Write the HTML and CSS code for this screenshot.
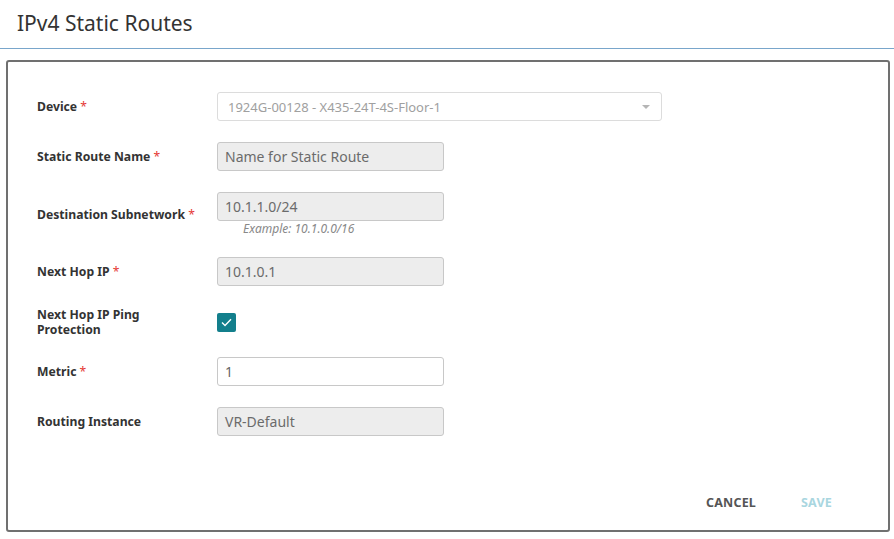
FILE: index.html
```html
<!DOCTYPE html>
<html>
<head>
<meta charset="utf-8">
<link rel="stylesheet" href="styles.css">
</head>
<body>
<div class="header"><h1 class="title">IPv4 Static Routes</h1></div>
<div class="dialog">
  <div class="form">
    <div class="row">
      <div class="label">Device <span class="req">*</span></div>
      <div class="select">
        <span>1924G-00128 - X435-24T-4S-Floor-1</span>
        <span class="caret"></span>
      </div>
    </div>
    <div class="row">
      <div class="label">Static Route Name <span class="req">*</span></div>
      <div class="input disabled">Name for Static Route</div>
    </div>
    <div class="row">
      <div class="label">Destination Subnetwork <span class="req">*</span></div>
      <div class="field">
        <div class="input disabled">10.1.1.0/24</div>
        <div class="help">Example: 10.1.0.0/16</div>
      </div>
    </div>
    <div class="row">
      <div class="label">Next Hop IP <span class="req">*</span></div>
      <div class="input disabled">10.1.0.1</div>
    </div>
    <div class="row row-check">
      <div class="label two">Next Hop IP Ping<br>Protection</div>
      <div class="checkbox">
        <svg width="11" height="9" viewBox="0 0 11 9"><path d="M1 4.6 L4 7.4 L10 1.2" fill="none" stroke="#fff" stroke-width="1.4"/></svg>
      </div>
    </div>
    <div class="row">
      <div class="label">Metric <span class="req">*</span></div>
      <div class="input">1</div>
    </div>
    <div class="row">
      <div class="label">Routing Instance</div>
      <div class="input disabled">VR-Default</div>
    </div>
  </div>
  <div class="footer">
    <span class="btn cancel">CANCEL</span>
    <span class="btn save">SAVE</span>
  </div>
</div>
</body>
</html>
```
FILE: styles.css
```css
* { box-sizing: border-box; }
html, body { margin: 0; padding: 0; background: #fff; }
body { font-family: "Noto Sans", "Open Sans", sans-serif; color: #333; width: 894px; height: 539px; overflow: hidden; }
.header { height: 49px; border-bottom: 1px solid #79a6cb; padding-left: 17px; }
.title { margin: 0; font-weight: 400; font-size: 21px; line-height: 46px; color: #333; }
.dialog {
  margin: 11px 0 0 6px;
  width: 884px;
  height: 472px;
  border: 2px solid #707070;
  border-radius: 3px;
  display: flex;
  flex-direction: column;
}
.form { padding: 30px 0 0 29px; display: flex; flex-direction: column; }
.row { display: flex; align-items: center; min-height: 29px; margin-bottom: 21px; }
.row:first-child { min-height: 28px; }
.row-check { min-height: 30px; margin-bottom: 20px; }
.label { width: 180px; font-size: 12.2px; font-weight: 700; color: #333; line-height: 15px; }
.req { color: #e53935; font-weight: 400; }
.select {
  width: 445px; height: 29px; border: 1px solid #dcdcdc; border-radius: 3px;
  display: flex; align-items: center; justify-content: space-between;
  padding: 0 11px 0 10px; font-size: 13px; color: #a0a0a0;
}
.caret { width: 0; height: 0; border-left: 4px solid transparent; border-right: 4px solid transparent; border-top: 4px solid #b5b5b5; }
.input {
  width: 227px; height: 29px; border: 1px solid #c8c8c8; border-radius: 3px;
  padding: 0 7px; font-size: 14px; line-height: 27px; color: #666; background: #fff;
}
.input.disabled { background: #ededed; color: #6b6b6b; }
.help { font-size: 12px; font-style: italic; color: #888; padding-left: 26px; line-height: 15px; }
.checkbox { width: 19px; height: 19px; border-radius: 2px; background: #137f8c; display: flex; align-items: center; justify-content: center; }
.footer { margin-top: auto; display: flex; justify-content: flex-end; align-items: center; gap: 45px; padding: 0 56px 19px 0; }
.btn { font-size: 12.5px; font-weight: 700; letter-spacing: 0.2px; }
.cancel { color: #555; }
.save { color: #a9d6df; }
```
